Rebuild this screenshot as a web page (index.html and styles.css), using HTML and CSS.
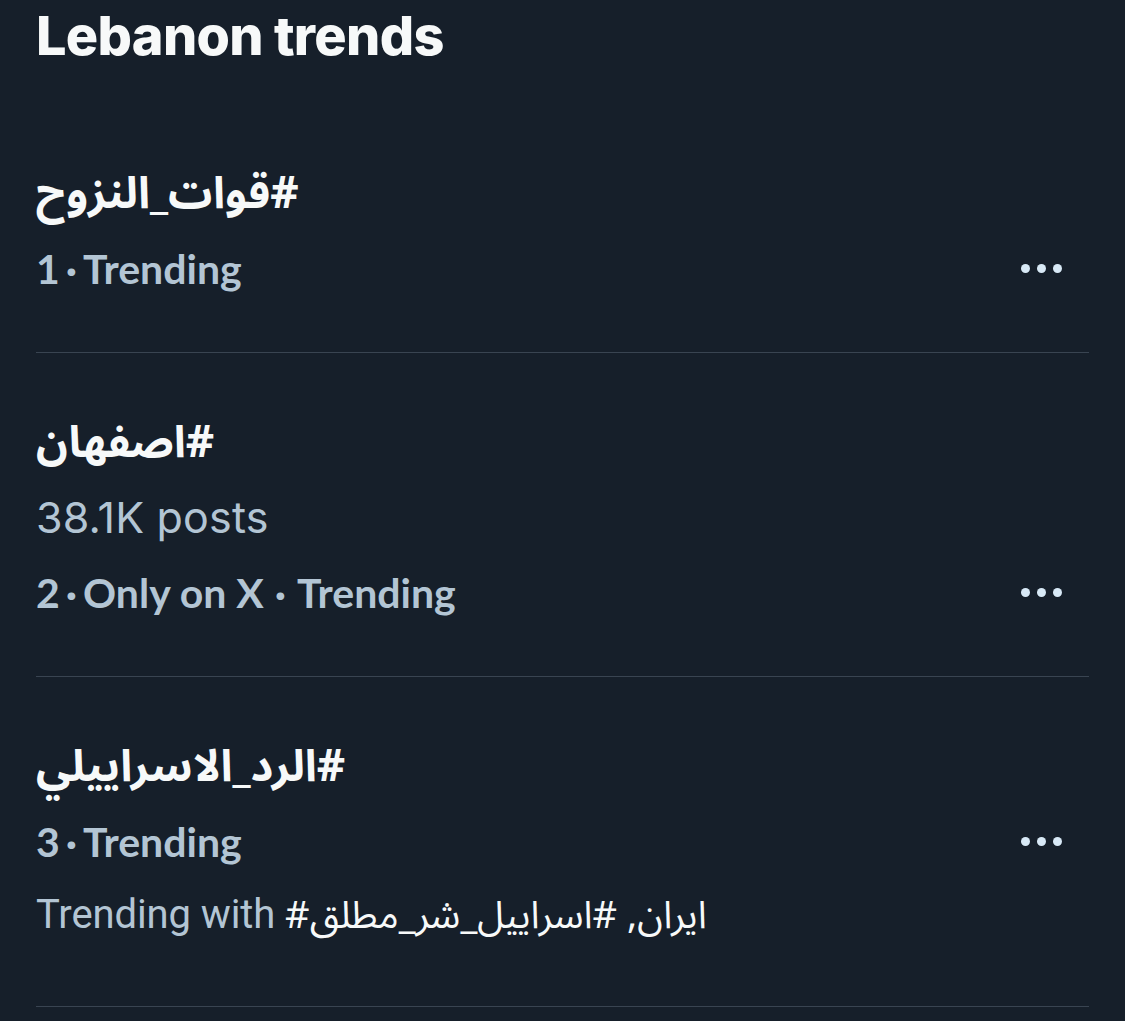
FILE: index.html
```html
<!DOCTYPE html>
<html lang="en">
<head>
<meta charset="utf-8">
<link rel="stylesheet" href="styles.css">
</head>
<body>
<main class="page">
  <h1 class="title">Lebanon trends</h1>
  <ul class="trends">
    <li class="trend">
      <div class="tag" dir="rtl">#قوات_النزوح</div>
      <div class="meta-row">
        <span class="meta">1<span class="dot">·</span>Trending</span>
        <span class="more"><i></i><i></i><i></i></span>
      </div>
    </li>
    <li class="trend">
      <div class="tag" dir="rtl">#اصفهان</div>
      <div class="count">38.1K posts</div>
      <div class="meta-row">
        <span class="meta">2<span class="dot">·</span>Only on X<span class="dot wide">·</span>Trending</span>
        <span class="more"><i></i><i></i><i></i></span>
      </div>
    </li>
    <li class="trend">
      <div class="tag" dir="rtl">#الرد_الاسراييلي</div>
      <div class="meta-row">
        <span class="meta">3<span class="dot">·</span>Trending</span>
        <span class="more"><i></i><i></i><i></i></span>
      </div>
      <div class="with">Trending with <span class="ar">#ايران, #اسراييل_شر_مطلق</span></div>
    </li>
  </ul>
</main>
</body>
</html>
```
FILE: styles.css
```css
html, body {
  margin: 0;
  padding: 0;
  background: #161f2a;
}
.page {
  padding: 0 36px;
  font-family: Inter, "Noto Sans", "Noto Sans Arabic", "DejaVu Sans", sans-serif;
  color: #f7f9f9;
}
.title {
  margin: 0;
  padding-top: 5px;
  font-size: 54px;
  line-height: 62px;
  font-weight: 800;
  letter-spacing: -0.7px;
}
.trends {
  list-style: none;
  margin: 0;
  padding: 0;
}
.trend {
  border-bottom: 1px solid #394451;
  padding: 53px 0 47px;
  display: flex;
  flex-direction: column;
}
.trend:first-child {
  padding-top: 90px;
}
.trend:last-child {
  padding-bottom: 53px;
}
.tag {
  align-self: flex-start;
  text-align: left;
  font-family: "Noto Sans Arabic", "DejaVu Sans", sans-serif;
  font-size: 44px;
  font-weight: 700;
  line-height: 74px;
}
.count {
  font-size: 43px;
  line-height: 75px;
  color: #b3c5d4;
  letter-spacing: 0.2px;
}
.meta-row {
  display: flex;
  align-items: center;
  justify-content: space-between;
  height: 74px;
  padding-right: 27px;
}
.meta {
  font-family: Lato, Inter, sans-serif;
  font-size: 41px;
  font-weight: 700;
  color: #b3c5d4;
}
.meta .dot {
  margin: 0 6px;
}
.meta .dot.wide {
  margin: 0 11px;
}
.more {
  display: flex;
  gap: 7px;
}
.more i {
  display: block;
  width: 9px;
  height: 9px;
  border-radius: 50%;
  background: #d8e9f6;
}
.with {
  font-family: Roboto, "Noto Sans", sans-serif;
  font-size: 40px;
  line-height: 74px;
  color: #b3c5d4;
  letter-spacing: -0.1px;
}
.with .ar {
  font-family: "Noto Sans Arabic", "DejaVu Sans", sans-serif;
  font-size: 38px;
  color: #f7f9f9;
  letter-spacing: 0;
}
```
